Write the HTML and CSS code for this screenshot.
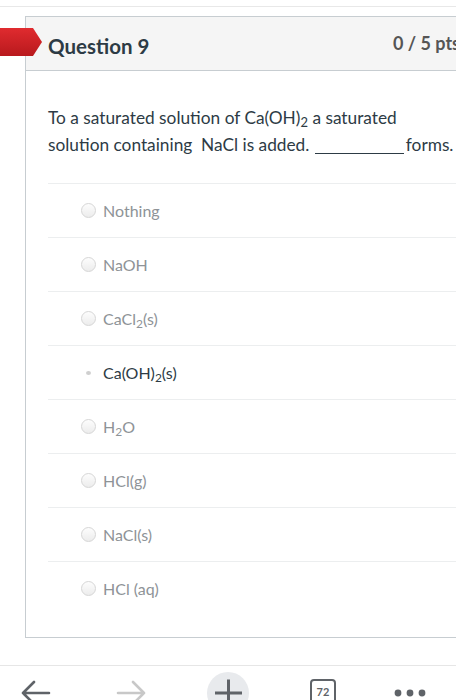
FILE: index.html
```html
<!DOCTYPE html>
<html>
<head>
<meta charset="utf-8">
<link rel="stylesheet" href="styles.css">
</head>
<body>
<div class="page">
  <div class="topline"></div>
  <div class="quiz">
    <div class="card">
      <div class="tag"></div>
      <div class="header">
        <h2 class="title">Question 9</h2>
        <span class="pts">0 / 5 pts</span>
      </div>
      <div class="body">
        <p class="qtext">To a saturated solution of Ca(OH)<sub>2</sub> a saturated<br>solution containing &nbsp;NaCl is added. <span class="blank"></span><span class="forms">forms.</span></p>
        <div class="answers">
          <div class="answer"><span class="radio"></span><span class="label">Nothing</span></div>
          <div class="answer"><span class="radio"></span><span class="label">NaOH</span></div>
          <div class="answer"><span class="radio"></span><span class="label">CaCl<sub>2</sub>(s)</span></div>
          <div class="answer selected"><span class="radio"></span><span class="label">Ca(OH)<sub>2</sub>(s)</span></div>
          <div class="answer"><span class="radio"></span><span class="label">H<sub>2</sub>O</span></div>
          <div class="answer"><span class="radio"></span><span class="label">HCl(g)</span></div>
          <div class="answer"><span class="radio"></span><span class="label">NaCl(s)</span></div>
          <div class="answer"><span class="radio"></span><span class="label">HCl (aq)</span></div>
        </div>
      </div>
    </div>
  </div>
  <div class="toolbar">
    <div class="tb back">
      <svg width="42" height="42" viewBox="0 0 42 42"><path d="M9 21H35M9 21L20 10M9 21L20 32" fill="none" stroke="#5f6368" stroke-width="2.6" stroke-linecap="round" stroke-linejoin="round"/></svg>
    </div>
    <div class="tb fwd">
      <svg width="42" height="42" viewBox="0 0 42 42"><path d="M8 21H34M34 21L23 10M34 21L23 32" fill="none" stroke="#c8c8c8" stroke-width="2.6" stroke-linecap="round" stroke-linejoin="round"/></svg>
    </div>
    <div class="tb plus">
      <svg width="42" height="42" viewBox="0 0 42 42"><circle cx="21" cy="21" r="21" fill="#e8eaed"/><path d="M8 21H35M21.5 7.5V35" fill="none" stroke="#5f6368" stroke-width="3"/></svg>
    </div>
    <div class="tb tabs">
      <span class="tabbox">72</span>
    </div>
    <div class="tb more">
      <svg width="42" height="42" viewBox="0 0 42 42"><circle cx="9" cy="21" r="3.4" fill="#5f6368"/><circle cx="21" cy="21" r="3.4" fill="#5f6368"/><circle cx="33" cy="21" r="3.4" fill="#5f6368"/></svg>
    </div>
  </div>
</div>
</body>
</html>
```
FILE: styles.css
```css
html, body {
  margin: 0;
  padding: 0;
  background: #fff;
}
body {
  width: 456px;
  height: 700px;
  overflow: hidden;
  font-family: Lato, "Open Sans", sans-serif;
}
.page {
  display: flex;
  flex-direction: column;
  height: 700px;
}
.topline {
  margin-top: 6px;
  height: 1px;
  background: #e8e8e8;
}
.quiz {
  padding-top: 9px;
  flex: 1;
}
.card {
  position: relative;
  margin-left: 25px;
  width: 446px;
  border: 1px solid #c7cdd1;
}
.tag {
  position: absolute;
  left: -26px;
  top: 11px;
  width: 42px;
  height: 28px;
  background: linear-gradient(#e02b2f, #b8191d);
  clip-path: polygon(0 0, 33px 0, 42px 50%, 33px 100%, 0 100%);
}
.header {
  height: 54px;
  box-sizing: border-box;
  display: flex;
  align-items: center;
  justify-content: space-between;
  padding: 5px 12px 0 22px;
  background: #f5f5f5;
  border-bottom: 1px solid #c7cdd1;
}
.title {
  margin: 0;
  font-size: 20.5px;
  font-weight: 700;
  color: #2d3b45;
}
.pts {
  font-size: 18px;
  font-weight: 700;
  color: #555;
  white-space: nowrap;
  margin-top: -6px;
}
.body {
  padding: 33px 0 22px 22px;
}
.qtext {
  margin: 0;
  font-size: 17.3px;
  line-height: 27px;
  color: #2d3b45;
  white-space: nowrap;
}
.blank {
  display: inline-block;
  width: 89px;
  height: 1px;
  background: #2d3b45;
  vertical-align: -3px;
  margin-left: 1px;
}
.forms {
  margin-left: 2px;
}
sub {
  font-size: 0.75em;
  vertical-align: -0.25em;
  line-height: 0;
}
.answers {
  margin-top: 25px;
}
.answer {
  height: 53px;
  border-top: 1px solid #eceeef;
  display: flex;
  align-items: center;
  padding-left: 33px;
  font-size: 16px;
  color: #8e9397;
}
.radio {
  width: 13px;
  height: 13px;
  border-radius: 50%;
  border: 1px solid #d6d6d6;
  background: linear-gradient(#fdfdfd, #ececec);
  margin-right: 7px;
  flex: none;
}
.answer.selected {
  color: #2d3b45;
}
.answer.selected .radio {
  width: 5px;
  height: 4px;
  border: none;
  background: #cfcfcf;
  margin: 0 12px 0 5px;
}
.toolbar {
  border-top: 1px solid #e6e6e6;
  height: 28px;
  display: flex;
  padding: 6px 0 0 14px;
}
.tb {
  width: 42px;
  height: 42px;
  flex: none;
}
.tb svg {
  display: block;
}
.fwd { margin-left: 54px; }
.plus { margin-left: 55px; }
.tabs {
  margin-left: 53px;
  display: flex;
  justify-content: center;
  padding-top: 7px;
  box-sizing: border-box;
}
.tabbox {
  width: 22px;
  height: 24px;
  border: 2px solid #5f6368;
  border-radius: 4px;
  font-size: 11px;
  font-weight: 700;
  color: #5f6368;
  text-align: center;
  line-height: 22px;
}
.more { margin-left: 45px; }
```
